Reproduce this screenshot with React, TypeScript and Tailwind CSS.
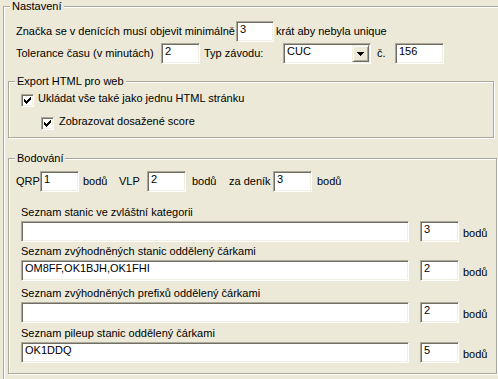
import React from "react";

// classic win32 look: sunken edit frame, raised button, etched group frame
const sunken =
  "border border-t-[#aca899] border-l-[#aca899] border-b-white border-r-white shadow-[inset_1px_1px_0_#716f64,inset_-1px_-1px_0_#f1efe2]";
const raised =
  "border border-t-[#f1efe2] border-l-[#f1efe2] border-b-[#716f64] border-r-[#716f64] shadow-[inset_1px_1px_0_#fff,inset_-1px_-1px_0_#aca899] bg-[#ece9d8]";

interface EditProps {
  value?: string;
  className?: string;
}

const Edit: React.FC<EditProps> = ({ value = "", className = "" }) => (
  <div className={`${sunken} bg-white h-[21px] pl-[3px] pt-[1px] shrink-0 whitespace-nowrap overflow-hidden ${className}`}>
    {value}
  </div>
);

const Check: React.FC = () => (
  <div className={`${sunken} bg-white w-[13px] h-[13px] shrink-0 flex items-center justify-center`}>
    <svg width="7" height="7" viewBox="0 0 7 7" shapeRendering="crispEdges">
      <path
        d="M0 2h1v3h-1z M1 3h1v3h-1z M2 4h1v3h-1z M3 3h1v3h-1z M4 2h1v3h-1z M5 1h1v3h-1z M6 0h1v3h-1z"
        fill="#000"
      />
    </svg>
  </div>
);

const Combo: React.FC<{ value: string }> = ({ value }) => (
  <div className={`${sunken} bg-white h-[21px] w-[88px] shrink-0 flex`}>
    <span className="flex-1 pl-[3px] pt-[1px]">{value}</span>
    <div className={`${raised} w-[17px] m-[1px] flex items-center justify-center`}>
      <svg width="7" height="4" viewBox="0 0 7 4" shapeRendering="crispEdges">
        <path d="M0 0h7v1h-7z M1 1h5v1h-5z M2 2h3v1h-3z M3 3h1v1h-1z" fill="#000" />
      </svg>
    </div>
  </div>
);

interface GroupBoxProps {
  title: string;
  className?: string;
  children?: React.ReactNode;
}

const GroupBox: React.FC<GroupBoxProps> = ({ title, className = "", children }) => (
  <div className={`relative shrink-0 border border-[#aca899] shadow-[inset_1px_1px_0_#fff,1px_1px_0_#fff] ${className}`}>
    <span className="absolute left-[6px] top-[-7px] px-[2px] bg-[#ece9d8] leading-[13px] whitespace-nowrap">
      {title}
    </span>
    {children}
  </div>
);

// list rows in the scoring group
const lists = [
  { label: "Seznam stanic ve zvláštní kategorii", value: "", points: "3", mt: "mt-[14px]" },
  { label: "Seznam zvýhodněných stanic oddělený čárkami", value: "OM8FF,OK1BJH,OK1FHI", points: "2", mt: "mt-[3px]" },
  { label: "Seznam zvýhodněných prefixů oddělený čárkami", value: "", points: "2", mt: "mt-[6px]" },
  { label: "Seznam pileup stanic oddělený čárkami", value: "OK1DDQ", points: "5", mt: "mt-[4px]" },
];

export default function App() {
  return (
    <div className="w-[498px] h-[379px] overflow-hidden bg-[#ece9d8] text-black text-[11px] leading-[13px] font-['Liberation_Sans',Arial,sans-serif]">
      <div className="pt-[6px] pl-[3px]">
        <GroupBox title="Nastavení" className="w-[530px] h-[400px]">
          {/* row 1 */}
          <div className="flex items-center h-[21px] mt-[14px] ml-[12px]">
            <span className="w-[220px] shrink-0 whitespace-nowrap">Značka se v denících musí objevit minimálně</span>
            <Edit value="3" className="w-[38px]" />
            <span className="ml-[2px] whitespace-nowrap">krát aby nebyla unique</span>
          </div>

          {/* row 2 */}
          <div className="flex items-center h-[21px] mt-[1px] ml-[12px]">
            <span className="w-[145px] shrink-0 whitespace-nowrap">Tolerance času (v minutách)</span>
            <Edit value="2" className="w-[39px]" />
            <span className="ml-[4px] w-[79px] shrink-0 whitespace-nowrap">Typ závodu:</span>
            <Combo value="CUC" />
            <span className="ml-[6px] w-[18px] shrink-0">č.</span>
            <Edit value="156" className="w-[49px]" />
          </div>

          {/* export */}
          <GroupBox title="Export HTML pro web" className="ml-[4px] mt-[17px] w-[486px] h-[57px]">
            <div className="flex items-start mt-[12px] ml-[12px]">
              <Check />
              <span className="ml-[4px] -mt-[2px] whitespace-nowrap">Ukládat vše také jako jednu HTML stránku</span>
            </div>
            <div className="flex items-start mt-[10px] ml-[32px]">
              <Check />
              <span className="ml-[5px] -mt-[2px] whitespace-nowrap">Zobrazovat dosažené score</span>
            </div>
          </GroupBox>

          {/* scoring */}
          <GroupBox title="Bodování" className="ml-[4px] mt-[20px] w-[489px] h-[216px]">
            <div className="flex items-center h-[21px] mt-[12px] ml-[7px]">
              <span className="w-[24px] shrink-0">QRP</span>
              <Edit value="1" className="w-[39px]" />
              <span className="ml-[4px] w-[36px] shrink-0">bodů</span>
              <span className="w-[28px] shrink-0">VLP</span>
              <Edit value="2" className="w-[39px]" />
              <span className="ml-[6px] w-[37px] shrink-0">bodů</span>
              <span className="w-[44px] shrink-0 whitespace-nowrap">za deník</span>
              <Edit value="3" className="w-[39px]" />
              <span className="ml-[5px]">bodů</span>
            </div>

            <div className="ml-[12px]">
              {lists.map((l) => (
                <div key={l.label} className={l.mt}>
                  <div className="whitespace-nowrap">{l.label}</div>
                  <div className="flex items-start mt-[2px]">
                    <Edit value={l.value} className="w-[388px]" />
                    <Edit value={l.points} className="w-[39px] ml-[11px]" />
                    <span className="ml-[4px] mt-[6px]">bodů</span>
                  </div>
                </div>
              ))}
            </div>
          </GroupBox>
        </GroupBox>
      </div>
    </div>
  );
}
